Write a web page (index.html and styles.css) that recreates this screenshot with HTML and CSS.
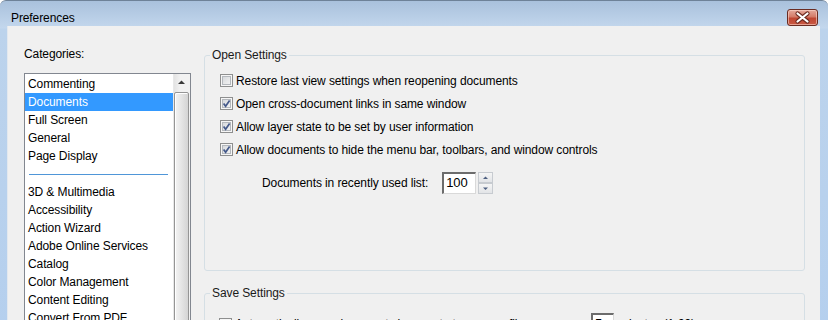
FILE: index.html
```html
<!DOCTYPE html>
<html>
<head>
<meta charset="utf-8">
<link rel="stylesheet" href="styles.css">
</head>
<body>
<div class="window">
  <div class="titlebar">
    <span class="title">Preferences</span>
    <div class="close">
      <svg width="31" height="17" viewBox="0 0 31 17">
        <path d="M10.5 4.5 L20.5 12.5 M20.5 4.5 L10.5 12.5" stroke="#6b2a20" stroke-width="4.2" stroke-linecap="round"/>
        <path d="M10.5 4.5 L20.5 12.5 M20.5 4.5 L10.5 12.5" stroke="#ffffff" stroke-width="2.2" stroke-linecap="round"/>
      </svg>
    </div>
  </div>
  <div class="client">
    <div class="left">
      <div class="cat-label">Categories:</div>
      <div class="listbox">
        <ul class="items">
          <li>Commenting</li>
          <li class="sel">Documents</li>
          <li>Full Screen</li>
          <li>General</li>
          <li>Page Display</li>
          <li class="sep"><span></span></li>
          <li>3D &amp; Multimedia</li>
          <li>Accessibility</li>
          <li>Action Wizard</li>
          <li>Adobe Online Services</li>
          <li>Catalog</li>
          <li>Color Management</li>
          <li>Content Editing</li>
          <li>Convert From PDF</li>
          <li>Convert To PDF</li>
        </ul>
        <div class="scrollbar">
          <div class="sb-up">
            <svg width="17" height="17" viewBox="0 0 17 17"><path d="M5 10 L12 10 L8.5 6.5 Z" fill="#3a3a3a"/></svg>
          </div>
          <div class="sb-thumb"></div>
        </div>
      </div>
    </div>
    <div class="right">
      <fieldset class="group">
        <legend>Open Settings</legend>
        <div class="group-body open-body">
          <div class="check-row"><span class="cb"></span><span class="lbl">Restore last view settings when reopening documents</span></div>
          <div class="check-row"><span class="cb"><svg width="13" height="13" viewBox="0 0 13 13"><path d="M3.6 6.4 L5.6 9.2 L9.6 3.4" fill="none" stroke="#44598a" stroke-width="1.7"/></svg></span><span class="lbl">Open cross-document links in same window</span></div>
          <div class="check-row"><span class="cb"><svg width="13" height="13" viewBox="0 0 13 13"><path d="M3.6 6.4 L5.6 9.2 L9.6 3.4" fill="none" stroke="#44598a" stroke-width="1.7"/></svg></span><span class="lbl">Allow layer state to be set by user information</span></div>
          <div class="check-row"><span class="cb"><svg width="13" height="13" viewBox="0 0 13 13"><path d="M3.6 6.4 L5.6 9.2 L9.6 3.4" fill="none" stroke="#44598a" stroke-width="1.7"/></svg></span><span class="lbl">Allow documents to hide the menu bar, toolbars, and window controls</span></div>
          <div class="num-row">
            <span class="num-label">Documents in recently used list:</span>
            <span class="textbox">100</span>
            <span class="spinner">
              <span class="spin-btn"><svg width="13" height="9" viewBox="0 0 13 9"><path d="M4 6 L9 6 L6.5 3.5 Z" fill="#4d5f80"/></svg></span>
              <span class="spin-btn"><svg width="13" height="9" viewBox="0 0 13 9"><path d="M4 3.5 L9 3.5 L6.5 6 Z" fill="#4d5f80"/></svg></span>
            </span>
          </div>
        </div>
      </fieldset>
      <fieldset class="group save">
        <legend>Save Settings</legend>
        <div class="group-body save-body">
          <div class="save-row">
            <span class="cb"><svg width="13" height="13" viewBox="0 0 13 13"><path d="M3.6 6.4 L5.6 9.2 L9.6 3.4" fill="none" stroke="#44598a" stroke-width="1.7"/></svg></span>
            <span class="lbl save-lbl">Automatically save document changes to temporary file every</span>
            <span class="textbox small">5</span>
            <span class="lbl minutes">minutes (1-99)</span>
          </div>
        </div>
      </fieldset>
    </div>
  </div>
</div>
</body>
</html>
```
FILE: styles.css
```css
html, body {
  margin: 0;
  padding: 0;
  overflow: hidden;
  background: #ffffff;
}
body {
  font-family: "Liberation Sans", Arial, sans-serif;
  font-size: 12px;
  letter-spacing: -0.1px;
  color: #000;
}
.window {
  width: 828px;
  height: 360px;
  box-sizing: border-box;
  border-radius: 6px 6px 0 0;
  border-top: 1px solid #6e8298;
  background: linear-gradient(to bottom, #a9c1dc 0px, #c3d7ed 27px, #bcd3ec 28px, #b4cfee 100%);
  display: flex;
  flex-direction: column;
}
.titlebar {
  height: 28px;
  display: flex;
  align-items: flex-start;
  padding: 0 10px 0 11px;
}
.title {
  margin-top: 10px;
  line-height: 15px;
  color: #000;
}
.close {
  margin-left: auto;
  margin-top: 8px;
  width: 29px;
  height: 15px;
  border: 1px solid #6a2c22;
  border-radius: 3px;
  background: linear-gradient(to bottom, #e4a99c 0%, #d47b68 45%, #bf4632 55%, #c95a44 100%);
  box-shadow: inset 0 0 0 1px rgba(255, 220, 210, 0.55);
  overflow: hidden;
}
.close svg {
  display: block;
  margin: -1px 0 0 -1px;
}
.client {
  flex: 1;
  display: flex;
  margin: 0 8px 0 7px;
  background: #f0f0f0;
  border-left: 1px solid #e2e8ef;
}
.left {
  width: 196px;
  box-sizing: border-box;
  padding: 21px 0 0 16px;
}
.cat-label {
  line-height: 15px;
  margin-bottom: 11px;
}
.listbox {
  width: 167px;
  height: 330px;
  box-sizing: border-box;
  border: 1px solid #828790;
  background: #fff;
  display: flex;
}
.items {
  list-style: none;
  margin: 0;
  padding: 1px 0 0 0;
  flex: 1;
}
.items li {
  height: 18px;
  line-height: 18px;
  padding-left: 3px;
  white-space: nowrap;
}
.items li.sel {
  background: #3399ff;
  color: #fff;
}
.items li.sep {
  display: flex;
  align-items: center;
  padding: 0 0 0 4px;
}
.items li.sep span {
  display: block;
  width: 139px;
  height: 1px;
  background: #4f96d8;
}
.scrollbar {
  width: 17px;
  display: flex;
  flex-direction: column;
  background: linear-gradient(to right, #e3e3e3, #f2f2f2 40%, #f2f2f2);
  border-left: 1px solid #e8e8e8;
  box-sizing: border-box;
}
.sb-up {
  height: 18px;
}
.sb-up svg {
  display: block;
  margin-left: -1px;
}
.sb-thumb {
  flex: 1;
  margin: 0 1px 0 0;
  border: 1px solid #959595;
  border-radius: 2px;
  background: linear-gradient(to right, #f4f4f4 0%, #e6e6e6 45%, #d4d4d4 100%);
  box-shadow: inset 1px 1px 0 #ffffff;
}
.right {
  flex: 1;
  padding: 22px 15px 0 0;
}
.group {
  margin: 0;
  padding: 0;
  border: 1px solid #d5dfe5;
  border-radius: 3px;
  min-inline-size: 0;
}
.group legend {
  margin-left: 5px;
  padding: 0 2px;
  line-height: 15px;
  color: #1a1a1a;
}
.group-body {
  padding: 6px 0 76px 15px;
}
.check-row {
  height: 23px;
  display: flex;
  align-items: center;
}
.cb {
  width: 13px;
  height: 13px;
  box-sizing: border-box;
  border: 1px solid #8e8f8f;
  background: linear-gradient(135deg, #cfd2d6 0%, #e9eaeb 60%, #f6f6f6 100%);
  box-shadow: inset 0 0 0 1px #f6f6f6, inset 0 0 0 2px #b4b8bd;
  flex: none;
  position: relative;
}
.cb svg {
  position: absolute;
  left: -1px;
  top: -1px;
}
.lbl {
  margin-left: 3px;
  white-space: nowrap;
}
.num-row {
  margin-top: 11px;
  height: 22px;
  display: flex;
  align-items: center;
  padding-left: 42px;
}
.num-label {
  white-space: nowrap;
}
.textbox {
  margin-left: 14px;
  width: 34px;
  height: 22px;
  box-sizing: border-box;
  border-top: 2px solid #6c6c6c;
  border-left: 2px solid #6c6c6c;
  border-right: 1px solid #d9d9d9;
  border-bottom: 1px solid #d9d9d9;
  background: #fff;
  line-height: 18px;
  padding-left: 2px;
  font-size: 13px;
}
.spinner {
  margin-left: 2px;
  width: 15px;
  height: 22px;
  display: flex;
  flex-direction: column;
}
.spin-btn {
  height: 11px;
  box-sizing: border-box;
  border: 1px solid #c7cbd0;
  background: linear-gradient(to bottom, #f5f5f5, #e2e4e7);
  display: block;
}
.spin-btn svg {
  display: block;
}
.save {
  margin-top: 15px;
}
.save-body {
  padding: 12px 0 20px 14px;
}
.save-row {
  height: 22px;
  display: flex;
  align-items: center;
}
.save-lbl {
  min-width: 340px;
}
.textbox.small {
  margin-left: 16px;
  width: 23px;
}
.minutes {
  margin-left: 5px;
}
```
